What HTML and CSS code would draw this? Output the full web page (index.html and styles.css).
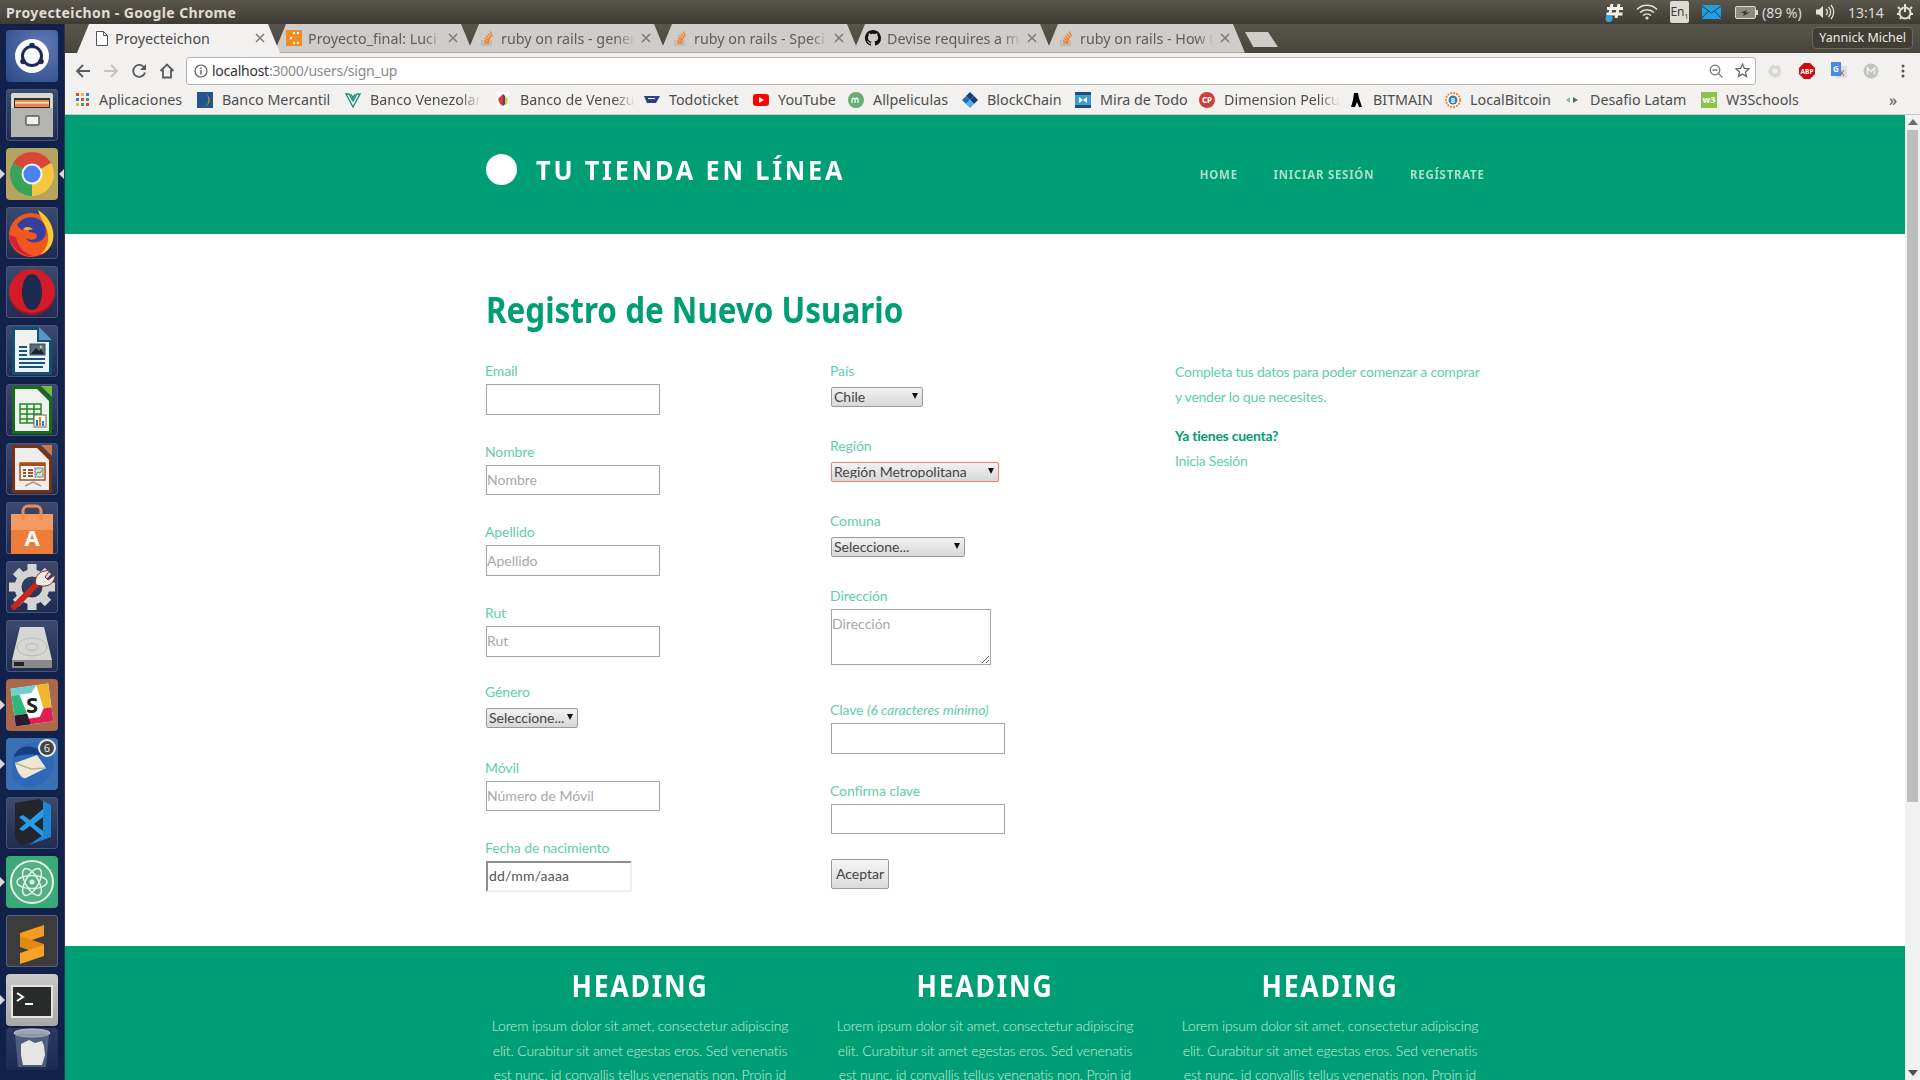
FILE: index.html
```html
<!DOCTYPE html>
<html lang="es">
<head>
<meta charset="utf-8">
<title>Proyecteichon</title>
<link rel="stylesheet" href="styles.css">
</head>
<body>
<svg class="defs" width="0" height="0" aria-hidden="true">
  <symbol id="so" viewBox="0 0 16 16">
    <path d="M3 10v5h9v-5" fill="none" stroke="#b5b5b5" stroke-width="1.4"/>
    <path d="M5 13h5.5M5 10.8l5.4 1.1M5.6 8.2l5 2.3M7 5.8l4.3 3.4M9 3.6l3.3 4.3M11.3 1.6l2 5" fill="none" stroke="#f0812a" stroke-width="1.4"/>
  </symbol>
  <symbol id="close" viewBox="0 0 10 10">
    <path d="M1 1l8 8M9 1l-8 8" stroke="currentColor" stroke-width="1.5"/>
  </symbol>
</svg>

<header class="panel">
  <span class="panel-title">Proyecteichon - Google Chrome</span>
  <div class="indicators">
    <svg class="ind-slack" width="22" height="22" viewBox="0 0 22 22"><path d="M8 3L5 17M15 3l-3 14M3 7.5h16M2.500 13h16" stroke="#f2f0ec" stroke-width="3"/><circle cx="5" cy="17.500" r="3.500" fill="#3aa3e3"/></svg>
    <svg class="ind-wifi" width="22" height="16" viewBox="0 0 22 16"><path d="M1 5.500a14 14 0 0 1 20 0M4 8.500a10 10 0 0 1 14 0M7 11.500a6 6 0 0 1 8 0" fill="none" stroke="#e4e1da" stroke-width="1.500"/><circle cx="11" cy="14" r="1.600" fill="#e4e1da"/></svg>
    <span class="ind-lang">En<sub>1</sub></span>
    <svg class="ind-mail" width="19" height="14" viewBox="0 0 19 14"><rect width="19" height="14" fill="#1f9fe0"/><path d="M0 1l9.500 7L19 1M0 13l6.500-7M19 13l-6.500-7" fill="none" stroke="#123a5c" stroke-width="1"/></svg>
    <svg class="ind-batt" width="23" height="13" viewBox="0 0 23 13"><rect x=".5" y=".5" width="20" height="12" rx="1.500" fill="#8d8a80" stroke="#dedbd3"/><rect x="21" y="4" width="2" height="5" fill="#dedbd3"/><path d="M5 7l7-3-1 2.500h4L8 10l1-3z" fill="#3c3a33"/></svg>
    <span class="ind-pct">(89 %)</span>
    <svg class="ind-vol" width="20" height="16" viewBox="0 0 20 16"><path d="M1 5.500h3L8 2v12l-4-3.500H1z" fill="#e4e1da"/><path d="M11 5a4 4 0 0 1 0 6M13.500 3a7 7 0 0 1 0 10M16 1a10.500 10.500 0 0 1 0 14" fill="none" stroke="#e4e1da" stroke-width="1.300"/></svg>
    <span class="ind-clock">13:14</span>
    <svg class="ind-gear" width="18" height="18" viewBox="0 0 18 18"><circle cx="9" cy="10" r="5.500" fill="none" stroke="#e4e1da" stroke-width="2"/><path d="M9 1v8" stroke="#e4e1da" stroke-width="2"/><path d="M2 4l2 2M16 4l-2 2M1 11h2M15 11h2M4 16l1-1.500M14 16l-1-1.500" stroke="#e4e1da" stroke-width="2"/></svg>
  </div>
</header>

<div class="desk">
  <nav class="launcher">
    <div class="tile t-ubuntu"><svg viewBox="0 0 52 52"><circle cx="26" cy="26" r="17" fill="#fff"/><circle cx="26" cy="26" r="9.500" fill="none" stroke="#1d2b58" stroke-width="3"/><circle cx="26" cy="15.500" r="2.800" fill="#1d2b58"/><circle cx="17" cy="31.500" r="2.800" fill="#1d2b58"/><circle cx="35" cy="31.500" r="2.800" fill="#1d2b58"/></svg></div>
    <div class="tile t-dark"><svg viewBox="0 0 52 52"><rect x="5" y="4" width="42" height="44" rx="2" fill="#d8d8d5"/><rect x="8" y="9" width="36" height="10" fill="#34302c"/><rect x="9" y="11" width="34" height="7" fill="#e9894a"/><rect x="9" y="13" width="34" height="1.500" fill="#fbe3c8"/><rect x="5" y="19" width="42" height="29" fill="#b4b4b2"/><rect x="20" y="27" width="13" height="9" rx="1" fill="#f0f0ee" stroke="#5d5d5b" stroke-width="1.500"/></svg></div>
    <div class="tile t-chrome running focused"><svg viewBox="0 0 52 52"><path d="M26 26L7 15A22 22 0 0 1 45 15Z" fill="#d8463a"/><path d="M26 26L45 15A22 22 0 0 1 26 48Z" fill="#f6c63f"/><path d="M26 26L26 48A22 22 0 0 1 7 15Z" fill="#3aa35a"/><circle cx="26" cy="26" r="10.500" fill="#f2f2f2"/><circle cx="26" cy="26" r="8.500" fill="#4a82ee"/></svg></div>
    <div class="tile t-dark"><svg viewBox="0 0 52 52"><circle cx="25" cy="28" r="22" fill="#f0561f"/><path d="M32 3c12 7 17 20 15 30-2 8-7 13-13 15 7-6 10-15 7-25-2-7-7-12-9-20z" fill="#fcc72f"/><path d="M11 18c5-8 16-10 23-5 7 5 8 15 2 20-6 4-14 3-16-2 5 3 11 2 11-2 0-3-5-4-8-4 0-3-3-2-5-2-3 0-5-2-7-5z" fill="#33409e"/><path d="M17 22c3-3 7-2 10 0-3 1-7 2-10 0z" fill="#ffa630"/><path d="M3 28c1 12 12 22 24 21-9-3-16-10-17-19z" fill="#d6203a"/></svg></div>
    <div class="tile t-dark"><svg viewBox="0 0 52 52"><circle cx="26" cy="26" r="23" fill="#d21a28"/><ellipse cx="26" cy="26" rx="10" ry="18" fill="#1c2a50"/><path d="M3 26a23 23 0 0 0 46 0c0 8-8 21-23 21S3 34 3 26z" fill="#9f1020"/></svg></div>
    <div class="tile t-dark"><svg viewBox="0 0 52 52"><path d="M6 2h27l13 13v35H6z" fill="#104f78"/><path d="M33 2l13 13H33z" fill="#5a97c2"/><path d="M9 5h22v12h12v30H9z" fill="#f2f2f0"/><g fill="#14557f"><rect x="13" y="21" width="8" height="2"/><rect x="13" y="25" width="8" height="2"/><rect x="13" y="29" width="8" height="2"/><rect x="13" y="33" width="26" height="2"/><rect x="13" y="37" width="26" height="2"/><rect x="13" y="41" width="24" height="2"/></g><rect x="24" y="19" width="15" height="11" fill="#5b6d7c" stroke="#14557f"/><path d="M25 29l5-6 3 3 2-2 3 5z" fill="#222"/><circle cx="35" cy="22" r="1.500" fill="#f3c13a"/></svg></div>
    <div class="tile t-dark"><svg viewBox="0 0 52 52"><path d="M6 2h27l13 13v35H6z" fill="#127014"/><path d="M35 2h11v11z" fill="#6fbf40"/><path d="M9 5h22l12 12v30H9z" fill="#f0f0ee"/><g fill="none" stroke="#1e8a20" stroke-width="1.500"><rect x="14" y="20" width="21" height="19"/><path d="M14 25h21M14 30h21M14 35h21M21 20v19M28 20v19"/></g><rect x="28" y="31" width="12" height="12" fill="#fff" stroke="#666"/><rect x="30" y="36" width="2" height="6" fill="#2a78c8"/><rect x="33" y="33" width="2" height="9" fill="#e8762d"/><rect x="36" y="37" width="2" height="5" fill="#2a78c8"/></svg></div>
    <div class="tile t-dark"><svg viewBox="0 0 52 52"><path d="M6 2h27l13 13v35H6z" fill="#7a3310"/><path d="M35 2h11v11z" fill="#c77a4c"/><path d="M9 5h22l12 12v30H9z" fill="#efeeec"/><rect x="14" y="20" width="25" height="17" fill="#fff" stroke="#b0491a" stroke-width="1.500"/><rect x="14" y="20" width="25" height="3" fill="#b0491a"/><g fill="#b0491a"><rect x="17" y="26" width="3" height="2"/><rect x="17" y="29" width="3" height="2"/><rect x="17" y="32" width="3" height="2"/><rect x="22" y="26" width="5" height="2"/><rect x="22" y="29" width="5" height="2"/><rect x="22" y="32" width="5" height="2"/></g><rect x="29" y="25" width="8" height="9" fill="#ddd" stroke="#777"/><path d="M30 32l2-3 2 1 2-3" fill="none" stroke="#3a9a3a"/><path d="M19 43l8-4 8 4" fill="none" stroke="#999" stroke-width="1.500"/></svg></div>
    <div class="tile t-dark"><svg viewBox="0 0 52 52"><path d="M5 12h42v40H5z" fill="#ee7d3b"/><path d="M5 12h42v16H5z" fill="#f59a62"/><path d="M17 18V9a5 5 0 0 1 5-5h8a5 5 0 0 1 5 5v9" fill="none" stroke="#f08a4b" stroke-width="3"/><text x="26" y="44" class="svg-a">A</text></svg></div>
    <div class="tile t-dark"><svg viewBox="0 0 52 52"><g fill="none" stroke="#d4d4d2" stroke-width="7"><circle cx="26" cy="26" r="14"/><path d="M26 3v8M26 41v8M3 26h8M41 26h8M10 10l5 5M37 37l5 5M10 42l5-5M37 15l5-5" stroke-width="9"/></g><path d="M8 46l24-24" stroke="#c8261c" stroke-width="6" stroke-linecap="round"/><path d="M30 24c-2-7 2-13 9-14l5-1-5 7 3 3 7-5c0 7-6 12-13 11z" fill="#ecebe8" stroke="#8c2a1f"/></svg></div>
    <div class="tile t-dark"><svg viewBox="0 0 52 52"><path d="M14 7h24l8 33v6a2 2 0 0 1-2 2H8a2 2 0 0 1-2-2v-6z" fill="#d6d6d4"/><ellipse cx="26" cy="27" rx="15" ry="9" fill="none" stroke="#b9b9b7"/><ellipse cx="26" cy="27" rx="6" ry="3.500" fill="none" stroke="#b9b9b7"/><path d="M6 40h40v6a2 2 0 0 1-2 2H8a2 2 0 0 1-2-2z" fill="#8a8a88"/><rect x="8" y="42" width="10" height="4" fill="#222"/></svg></div>
    <div class="tile t-slack running"><svg viewBox="0 0 52 52"><g transform="rotate(-8 26 26)"><rect x="7" y="7" width="38" height="38" fill="#fff"/><path d="M7 7h26L27 14H7z" fill="#6fcfd0"/><path d="M7 14h8l5 20H7z" fill="#2fb67f"/><path d="M33 7h12v24H37z" fill="#eeb72f"/><path d="M37 31h8v14H17l-1-6h16z" fill="#df1f52"/><path d="M7 34h13l2 11H7z" fill="#2d1a2e"/></g><text x="26" y="34" class="svg-s">S</text></svg></div>
    <div class="tile t-blue running"><svg viewBox="0 0 52 52"><path d="M6 24C6 14 16 5 27 5c10 0 18 6 20 14 3 14-5 27-19 30C17 51 8 45 6 35z" fill="#2d69b8"/><path d="M9 25l22-8 9 13-20 10c-5 2-10-9-11-15z" fill="#efe7d3"/><path d="M9 25l16 6 15-1" fill="none" stroke="#bdb295" stroke-width="1.500"/><path d="M8 19c2-8 11-12 18-10 6 1 10 5 13 10-8-4-20-3-31 0z" fill="#173e85"/></svg><span class="badge">6</span></div>
    <div class="tile t-dark"><svg viewBox="0 0 52 52"><path d="M9 6l24-4 12 8v30l-30 8L9 40z" fill="#22262b"/><path d="M37 4l8 4v32l-22 8 14-10z" fill="#1f86d4"/><path d="M37 12L24 23l-7-5-4 2 7 6-7 6 4 2 7-5 13 11z" fill="#2a9be8"/><path d="M37 20v14l-9-7z" fill="#22262b"/></svg></div>
    <div class="tile t-atom running"><svg viewBox="0 0 52 52"><circle cx="26" cy="26" r="21" fill="#54b082" stroke="#e3f3ea" stroke-width="2"/><g fill="none" stroke="#e3f3ea" stroke-width="1.500"><ellipse cx="26" cy="26" rx="15" ry="6.500" transform="rotate(60 26 26)"/><ellipse cx="26" cy="26" rx="15" ry="6.500" transform="rotate(-60 26 26)"/><ellipse cx="26" cy="26" rx="15" ry="6.500"/></g><circle cx="26" cy="26" r="2.500" fill="#e3f3ea"/></svg></div>
    <div class="tile t-sublime"><svg viewBox="0 0 52 52"><path d="M38 10v11L14 29V18z" fill="#f59c1e"/><path d="M14 21l24 8v11L14 32z" fill="#e08a14"/><path d="M38 30v11l-24 8V38z" fill="#f7a323"/></svg></div>
    <div class="tile t-term running"><svg viewBox="0 0 52 52"><rect x="5" y="11" width="42" height="33" fill="#e4e4e4"/><rect x="7" y="13" width="38" height="29" fill="#292b2a"/><path d="M11 19l6 4-6 4" fill="none" stroke="#fff" stroke-width="2"/><rect x="19" y="29" width="8" height="2" fill="#fff"/></svg></div>
    <div class="tile t-trash"><svg viewBox="0 0 52 42"><ellipse cx="26" cy="5" rx="18" ry="4" fill="#9aa4b4" stroke="#ccc"/><path d="M9 6l3 33h28l3-33" fill="#7c8a9e" opacity=".5"/><path d="M15 16l8-4 6 3 7-2 2 5 1 9-3 10H17l-2-10z" fill="#e6e6e4"/></svg></div>
  </nav>

  <div class="browser">
    <div class="tabstrip">
      <div class="tab tab-active">
        <svg class="fav-doc" width="12" height="15" viewBox="0 0 12 15"><path d="M.5.500h7l4 4v10H.500z M7.500.500v4h4" fill="#fff" stroke="#555"/></svg>
        <span class="tab-title">Proyecteichon</span>
        <svg class="tab-close" width="10" height="10"><use href="#close"/></svg>
      </div>
      <div class="tab">
        <svg width="16" height="16" viewBox="0 0 16 16"><rect width="16" height="16" rx="1" fill="#ef8c22"/><g fill="#fff"><circle cx="8" cy="3" r="1.200"/><circle cx="12" cy="3" r="1.200"/><circle cx="5" cy="8" r="1.200"/><circle cx="8" cy="13" r="1.200"/><circle cx="12" cy="13" r="1.200"/></g></svg>
        <span class="tab-title">Proyecto_final: Luci</span>
        <svg class="tab-close" width="10" height="10"><use href="#close"/></svg>
      </div>
      <div class="tab">
        <svg width="16" height="16"><use href="#so"/></svg>
        <span class="tab-title">ruby on rails - gener</span>
        <svg class="tab-close" width="10" height="10"><use href="#close"/></svg>
      </div>
      <div class="tab">
        <svg width="16" height="16"><use href="#so"/></svg>
        <span class="tab-title">ruby on rails - Speci</span>
        <svg class="tab-close" width="10" height="10"><use href="#close"/></svg>
      </div>
      <div class="tab">
        <svg width="16" height="16" viewBox="0 0 16 16"><path fill="#111" d="M8 0C3.580 0 0 3.580 0 8c0 3.540 2.290 6.530 5.470 7.590.4.070.55-.17.55-.38 0-.19-.01-.82-.01-1.490-2.010.37-2.530-.49-2.690-.94-.09-.23-.48-.94-.82-1.130-.28-.15-.68-.52-.01-.53.63-.01 1.080.58 1.230.82.720 1.210 1.870.87 2.330.66.070-.52.280-.87.510-1.070-1.780-.2-3.640-.89-3.640-3.950 0-.87.310-1.590.820-2.150-.08-.2-.36-1.020.08-2.120 0 0 .67-.21 2.200.82.640-.18 1.320-.27 2-.27.680 0 1.360.090 2 .27 1.530-1.040 2.200-.82 2.200-.82.440 1.100.160 1.920.080 2.120.510.560.820 1.270.820 2.150 0 3.070-1.870 3.750-3.650 3.950.290.250.540.730.540 1.480 0 1.070-.01 1.930-.01 2.200 0 .210.150.460.550.380A8.013 8.013 0 0016 8c0-4.420-3.580-8-8-8z"/></svg>
        <span class="tab-title">Devise requires a m</span>
        <svg class="tab-close" width="10" height="10"><use href="#close"/></svg>
      </div>
      <div class="tab">
        <svg width="16" height="16"><use href="#so"/></svg>
        <span class="tab-title">ruby on rails - How t</span>
        <svg class="tab-close" width="10" height="10"><use href="#close"/></svg>
      </div>
      <div class="newtab"></div>
      <div class="profile">Yannick Michel</div>
    </div>

    <div class="toolbar">
      <svg class="tool" width="16" height="16" viewBox="0 0 16 16"><path d="M15 8H2M8 2L2 8l6 6" fill="none" stroke="#5a5a5a" stroke-width="1.800"/></svg>
      <svg class="tool" width="16" height="16" viewBox="0 0 16 16"><path d="M1 8h13M8 2l6 6-6 6" fill="none" stroke="#c2c2c0" stroke-width="1.800"/></svg>
      <svg class="tool" width="16" height="16" viewBox="0 0 16 16"><path d="M13.500 5A6 6 0 1 0 14 9.500" fill="none" stroke="#5a5a5a" stroke-width="1.800"/><path d="M15 1v6H9z" fill="#5a5a5a"/></svg>
      <svg class="tool" width="16" height="16" viewBox="0 0 16 16"><path d="M1.500 8L8 1.500 14.500 8M4 6.500V14.500h8V6.500" fill="none" stroke="#5a5a5a" stroke-width="1.800"/></svg>
      <div class="omnibox">
        <svg width="14" height="14" viewBox="0 0 14 14"><circle cx="7" cy="7" r="6" fill="none" stroke="#5f5f5f" stroke-width="1.200"/><rect x="6.300" y="6" width="1.400" height="4.500" fill="#5f5f5f"/><rect x="6.300" y="3.500" width="1.400" height="1.500" fill="#5f5f5f"/></svg>
        <span class="url"><span class="url-host">localhost</span>:3000/users/sign_up</span>
        <svg width="14" height="14" viewBox="0 0 14 14"><circle cx="6" cy="6" r="4.800" fill="none" stroke="#777" stroke-width="1.300"/><path d="M3.500 6h5M9.500 9.500L13.500 13.500" stroke="#777" stroke-width="1.300"/></svg>
        <svg width="15" height="15" viewBox="0 0 15 15"><path d="M7.500 1.200l1.900 4.200 4.500.5-3.400 3 1 4.500-4-2.300-4 2.300 1-4.500-3.400-3 4.500-.5z" fill="none" stroke="#666" stroke-width="1.300"/></svg>
      </div>
      <div class="exts">
        <svg width="16" height="16" viewBox="0 0 16 16"><path d="M3 4l3-3 2 2 4-1 2 5-1 6-5 2-5-3-2-4z" fill="#d8d8d6"/><circle cx="8" cy="8" r="2.500" fill="#f2f1f0"/></svg>
        <svg width="16" height="16" viewBox="0 0 16 16"><path d="M5 0h6l5 5v6l-5 5H5l-5-5V5z" fill="#c70d0d"/><text x="8" y="11" class="svg-abp">ABP</text></svg>
        <svg width="16" height="18" viewBox="0 0 16 18"><rect x="5" y="4" width="11" height="12" fill="#ddd"/><rect width="10" height="14" fill="#4b86ec"/><text x="5" y="10" class="svg-g">G</text><path d="M9 8l4 6M13 8l-4 6" stroke="#777"/></svg>
        <svg width="16" height="16" viewBox="0 0 16 16"><circle cx="8" cy="8" r="7.500" fill="#c3c3c1"/><path d="M4.500 11.500V5L8 8.500 11.500 5v6.500" fill="none" stroke="#f2f1f0" stroke-width="1.500"/></svg>
        <svg width="16" height="16" viewBox="0 0 16 16"><g fill="#555"><circle cx="8" cy="3" r="1.500"/><circle cx="8" cy="8" r="1.500"/><circle cx="8" cy="13" r="1.500"/></g></svg>
      </div>
    </div>

    <div class="bookmarks">
      <div class="bm"><svg width="13" height="13" viewBox="0 0 13 13"><g><rect width="3" height="3" fill="#e2453a"/><rect x="5" width="3" height="3" fill="#f3b52e"/><rect x="10" width="3" height="3" fill="#3a77e8"/><rect y="5" width="3" height="3" fill="#3a77e8"/><rect x="5" y="5" width="3" height="3" fill="#e2453a"/><rect x="10" y="5" width="3" height="3" fill="#3ba55a"/><rect y="10" width="3" height="3" fill="#f3b52e"/><rect x="5" y="10" width="3" height="3" fill="#3ba55a"/><rect x="10" y="10" width="3" height="3" fill="#e2453a"/></g></svg><span>Aplicaciones</span></div>
      <div class="bm"><svg width="16" height="16" viewBox="0 0 16 16"><rect width="16" height="16" fill="#24558e"/><path d="M6 15c5-1 7-6 4-13 4 5 4 11-4 13z" fill="#f08a22"/></svg><span>Banco Mercantil</span></div>
      <div class="bm"><svg width="16" height="16" viewBox="0 0 16 16"><path d="M1 2l7 13 7-13h-3L8 9 4 2z M6 2l2 4 2-4" fill="none" stroke="#1f8a78" stroke-width="1.300"/></svg><span class="bm-fade">Banco Venezolar</span></div>
      <div class="bm"><svg width="16" height="16" viewBox="0 0 16 16"><rect x="2" width="12" height="16" fill="#fff"/><path d="M3 7l5-5v12L5 12z" fill="#e4362d"/><path d="M8 2l5 5-1 5-4 2z" fill="#f2c32e"/><path d="M8 2l2 2v8l-2 2z" fill="#25519e"/></svg><span class="bm-fade">Banco de Venezu</span></div>
      <div class="bm"><svg width="16" height="16" viewBox="0 0 16 16"><path d="M0 4h16l-4 7H3z" fill="#2c3f8f"/><path d="M4 6.500h7" stroke="#fff"/></svg><span>Todoticket</span></div>
      <div class="bm"><svg width="16" height="16" viewBox="0 0 16 16"><rect y="2" width="16" height="12" rx="3" fill="#f00"/><path d="M6 5l5 3-5 3z" fill="#fff"/></svg><span>YouTube</span></div>
      <div class="bm"><svg width="16" height="16" viewBox="0 0 16 16"><circle cx="8" cy="8" r="8" fill="#67ad6f"/><path d="M4 11V7M7 11V7M10 11V7M4 7c1-1 2-1 3 0 1-1 2-1 3 0" fill="none" stroke="#fff" stroke-width="1.200"/></svg><span>Allpeliculas</span></div>
      <div class="bm"><svg width="16" height="16" viewBox="0 0 16 16"><path d="M8 0l4 4-4 4-4-4z" fill="#123f7a"/><path d="M4 4l4 4-4 4-4-4z" fill="#1f6fb5"/><path d="M12 4l4 4-4 4-4-4z" fill="#123f7a"/><path d="M8 8l4 4-4 4-4-4z" fill="#4ab0ee"/></svg><span>BlockChain</span></div>
      <div class="bm"><svg width="16" height="16" viewBox="0 0 16 16"><rect width="16" height="16" fill="#1b4f7c"/><rect y="3" width="16" height="10" fill="#3f9ad0"/><path d="M4 5l4 3 4-3v6L8 8l-4 3z" fill="#fff"/></svg><span>Mira de Todo</span></div>
      <div class="bm"><svg width="16" height="16" viewBox="0 0 16 16"><circle cx="8" cy="8" r="8" fill="#c9423a"/><text x="8" y="11" class="svg-cp">CP</text></svg><span class="bm-fade">Dimension Pelicu</span></div>
      <div class="bm"><svg width="14" height="16" viewBox="0 0 14 16"><path d="M4 1h4l1 5 3 9H9L7 10l-2 5H1l2-7z" fill="#000"/></svg><span>BITMAIN</span></div>
      <div class="bm"><svg width="16" height="16" viewBox="0 0 16 16"><circle cx="8" cy="8" r="7" fill="#fff" stroke="#ee8a3a" stroke-width="2" stroke-dasharray="2 1"/><circle cx="8" cy="8" r="4.500" fill="#2b7fc0"/><text x="8" y="10.500" class="svg-b">B</text></svg><span>LocalBitcoin</span></div>
      <div class="bm"><svg width="14" height="16" viewBox="0 0 14 16"><path d="M5 5L1 8l4 3z" fill="#8cbd8c"/><path d="M8 5l5 3-5 3z" fill="#5a6d5a"/></svg><span class="bm-d">Desafio Latam</span></div>
      <div class="bm"><svg width="16" height="16" viewBox="0 0 16 16"><rect width="16" height="16" fill="#8bc34a"/><text x="8" y="11" class="svg-w3">w3</text></svg><span>W3Schools</span></div>
      <span class="bm-more">»</span>
    </div>

    <div class="viewport">
      <div class="page">
        <header class="site-head">
          <div class="wrap site-row">
            <a class="brand"><span class="brand-dot"></span><span class="brand-name">TU TIENDA EN LÍNEA</span></a>
            <ul class="site-nav">
              <li>HOME</li>
              <li>INICIAR SESIÓN</li>
              <li>REGÍSTRATE</li>
            </ul>
          </div>
        </header>

        <main class="content">
          <div class="wrap">
            <h1>Registro de Nuevo Usuario</h1>
            <form class="grid">
              <div class="col">
                <div class="field"><label>Email</label><input class="text" type="email"></div>
                <div class="field"><label>Nombre</label><input class="text" type="text" placeholder="Nombre"></div>
                <div class="field"><label>Apellido</label><input class="text" type="text" placeholder="Apellido"></div>
                <div class="field field-tight"><label>Rut</label><input class="text" type="text" placeholder="Rut"></div>
                <div class="field field-sel field-gender"><label>Género</label>
                  <div class="sel sel-s"><select><option>Seleccione...</option></select></div></div>
                <div class="field"><label>Móvil</label><input class="text" type="text" placeholder="Número de Móvil"></div>
                <div class="field"><label>Fecha de nacimiento</label><input class="date" type="text" value="dd/mm/aaaa"></div>
              </div>
              <div class="col">
                <div class="field field-sel"><label>País</label>
                  <div class="sel sel-s"><select><option>Chile</option></select></div></div>
                <div class="field field-sel"><label>Región</label>
                  <div class="sel sel-l"><select class="focus"><option>Región Metropolitana</option></select></div></div>
                <div class="field field-sel"><label>Comuna</label>
                  <div class="sel sel-m"><select><option>Seleccione...</option></select></div></div>
                <div class="field field-area"><label>Dirección</label><textarea placeholder="Dirección"></textarea></div>
                <div class="field"><label>Clave <em>(6 caracteres mínimo)</em></label><input class="text" type="password"></div>
                <div class="field field-last"><label>Confirma clave</label><input class="text" type="password"></div>
                <button class="submit" type="button">Aceptar</button>
              </div>
              <aside class="col side">
                <p>Completa tus datos para poder comenzar a comprar<br>y vender lo que necesites.</p>
                <p class="side-q">Ya tienes cuenta?</p>
                <p>Inicia Sesión</p>
              </aside>
            </form>
          </div>
        </main>

        <footer class="site-foot">
          <div class="wrap grid">
            <section class="foot-col"><h3>HEADING</h3><p>Lorem ipsum dolor sit amet, consectetur adipiscing<br>elit. Curabitur sit amet egestas eros. Sed venenatis<br>est nunc, id convallis tellus venenatis non. Proin id</p></section>
            <section class="foot-col"><h3>HEADING</h3><p>Lorem ipsum dolor sit amet, consectetur adipiscing<br>elit. Curabitur sit amet egestas eros. Sed venenatis<br>est nunc, id convallis tellus venenatis non. Proin id</p></section>
            <section class="foot-col"><h3>HEADING</h3><p>Lorem ipsum dolor sit amet, consectetur adipiscing<br>elit. Curabitur sit amet egestas eros. Sed venenatis<br>est nunc, id convallis tellus venenatis non. Proin id</p></section>
          </div>
        </footer>
      </div>
      <div class="scrollbar">
        <span class="arrow-up"></span>
        <span class="thumb"></span>
        <span class="arrow-down"></span>
      </div>
    </div>
  </div>
</div>
</body>
</html>
```

FILE: styles.css
```css
* { box-sizing: border-box; }
html, body { margin: 0; height: 1080px; overflow: hidden; }
body { font-family: "Noto Sans", sans-serif; background: #fff; display: flex; flex-direction: column; width: 1920px; }
.defs { position: absolute; }

/* top panel */
.panel { height: 24px; flex: none; display: flex; align-items: center; justify-content: space-between; padding-left: 6px; background: linear-gradient(#5a574c, #3d3b34); color: #e0ddd4; }
.panel-title { font: 700 14px "Noto Sans", sans-serif; letter-spacing: .4px; }
.indicators { display: flex; align-items: center; height: 24px; font-size: 14px; }
.ind-slack { margin-right: 10px; margin-left: 3px; }
.ind-wifi { margin-right: 12px; }
.ind-lang { width: 19px; height: 22px; margin-right: 13px; background: #dedbd3; color: #3c3a33; border-radius: 2px; font-size: 12px; line-height: 22px; text-align: center; white-space: nowrap; overflow: hidden; }
.ind-lang sub { font-size: 7px; }
.ind-mail { margin-right: 14px; }
.ind-batt { margin-right: 4px; }
.ind-pct { width: 53px; font-size: 14px; color: #dedbd3; white-space: nowrap; }
.ind-vol { margin-right: 13px; }
.ind-clock { width: 48px; font-size: 14px; color: #dedbd3; }
.ind-gear { margin-right: 6px; }

.desk { flex: 1; display: flex; min-height: 0; }

/* launcher */
.launcher { width: 65px; flex: none; background: #11214a; display: flex; flex-direction: column; align-items: flex-start; gap: 7px; padding: 6px 0 0 6px; overflow: hidden; border-right: 1px solid #2b3350; }
.tile { position: relative; width: 52px; height: 52px; flex: none; border-radius: 4px; }
.tile svg { display: block; width: 52px; height: 52px; }
.t-ubuntu { background: radial-gradient(circle at 70% 30%, #5e79b4, #2c4889); }
.t-dark { background: linear-gradient(#3d4a70, #1f2c52); box-shadow: inset 0 0 0 1px #4a5678; }
.t-chrome { background: #b5a45f; }
.t-slack { background: #a9694a; }
.t-blue { background: #3b70b2; }
.t-atom { background: #3aa877; }
.t-sublime { background: #3c3c3c; box-shadow: inset 0 0 0 1px #566084; }
.t-term { background: linear-gradient(#c9c9c9, #a8a8a8); }
.t-trash { height: 42px; margin-top: -5px; background: linear-gradient(#2a3a60, #1a2a50); }
.t-trash svg { height: 42px; }
.running::before { content: ""; position: absolute; left: -6px; top: 21px; border: 5px solid transparent; border-left-color: #d8d8d8; border-right-width: 0; }
.focused::after { content: ""; position: absolute; right: -6px; top: 21px; border: 5px solid transparent; border-right-color: #d8d8d8; border-left-width: 0; }
.badge { position: absolute; top: 1px; right: 2px; width: 18px; height: 18px; border-radius: 50%; background: #444; border: 2px solid #eee; color: #eee; font-size: 11px; line-height: 14px; text-align: center; }
.svg-a { font: 700 22px "Noto Sans", sans-serif; fill: #fff; text-anchor: middle; }
.svg-s { font: 700 22px "Noto Sans", sans-serif; fill: #222; text-anchor: middle; }
.svg-abp { font: 700 6.500px "Noto Sans", sans-serif; fill: #fff; text-anchor: middle; }
.svg-g { font: 700 8px "Noto Sans", sans-serif; fill: #fff; text-anchor: middle; }
.svg-cp { font: 700 8px "Noto Sans", sans-serif; fill: #fff; text-anchor: middle; }
.svg-b { font: 700 6.500px "Noto Sans", sans-serif; fill: #fff; text-anchor: middle; }
.svg-w3 { font: 700 9px "Noto Sans", sans-serif; fill: #fff; text-anchor: middle; }

/* browser */
.browser { flex: 1; min-width: 0; display: flex; flex-direction: column; }
.tabstrip { height: 29px; flex: none; display: flex; padding-left: 12px; background: linear-gradient(#58554b, #48453c); }
.tab { position: relative; width: 199px; height: 29px; margin-right: -6px; padding: 0 15px 1px 12px; display: flex; align-items: center; gap: 6px; background: linear-gradient(#cfccc9 28px, #a8a5a0 0); clip-path: polygon(0 100%, 12px 0, calc(100% - 12px) 0, 100% 100%); font-size: 14.300px; color: #5f5e5c; }
.tab > svg:first-child { flex: none; }
.tab-active { width: 203px; padding-left: 19px; background: #f2f1f0; z-index: 1; color: #4a4a48; }
.tab-active .tab-title { margin-left: 1px; }
.tab-title { flex: 1; min-width: 0; white-space: nowrap; -webkit-mask-image: linear-gradient(to right, #000 calc(100% - 18px), transparent); mask-image: linear-gradient(to right, #000 calc(100% - 18px), transparent); }
.tab-active .tab-title { -webkit-mask-image: none; mask-image: none; }
.tab-close { flex: none; color: #7d7c7a; }
.newtab { width: 33px; height: 15px; margin: 8px 0 0 6px; background: #cfccc9; clip-path: polygon(0 0, 70% 0, 100% 100%, 25% 100%); flex: none; }
.profile { margin: 3px 7px 0 auto; height: 22px; padding: 0 6px; border: 1px solid #6a675d; border-radius: 4px; background: #3f3d36; color: #eeece6; font-size: 12.500px; line-height: 20px; white-space: nowrap; }

.toolbar { height: 32px; flex: none; display: flex; align-items: center; padding: 3px 10px 0 10px; background: #f2f1f0; }
.tool { flex: none; margin-right: 12px; }
.tool:nth-child(4) { margin-right: 11px; }
.omnibox { width: 1570px; height: 28px; flex: none; display: flex; align-items: center; gap: 5px; padding: 0 5px 0 7px; background: #fff; border: 1px solid #b8b5b0; border-radius: 3px; }
.url { flex: 1; font-size: 14px; letter-spacing: -.25px; color: #8a8a8a; margin-left: -1px; }
.url-host { color: #333; }
.omnibox svg:nth-last-child(2) { margin-right: 7px; }
.exts { display: flex; align-items: center; margin-left: 11px; gap: 16px; }

.bookmarks { height: 30px; flex: none; display: flex; align-items: center; padding-left: 11px; background: #f2f1f0; border-bottom: 1px solid #c9c7c4; font-size: 14.300px; color: #4d4d4b; }
.bm { display: flex; align-items: center; gap: 9px; flex: none; white-space: nowrap; }
.bm svg { flex: none; }
.bm:nth-child(1) { width: 121px; gap: 10px; }
.bm:nth-child(2) { width: 148px; }
.bm:nth-child(3) { width: 150px; }
.bm:nth-child(4) { width: 149px; }
.bm:nth-child(5) { width: 109px; }
.bm:nth-child(6) { width: 95px; }
.bm:nth-child(7) { width: 114px; }
.bm:nth-child(8) { width: 113px; }
.bm:nth-child(9) { width: 124px; }
.bm:nth-child(10) { width: 151px; }
.bm:nth-child(11) { width: 95px; }
.bm:nth-child(12) { width: 120px; }
.bm:nth-child(13) { width: 136px; gap: 11px; }
.bm:nth-child(14) { width: 188px; }
.bm-fade { -webkit-mask-image: linear-gradient(to right, #000 82%, transparent); mask-image: linear-gradient(to right, #000 82%, transparent); }
.bm-more { font-size: 16px; color: #555; }

/* viewport */
.viewport { flex: 1; min-height: 0; display: flex; }
.page { flex: 1; min-width: 0; overflow: hidden; font-family: Lato, sans-serif; }
.scrollbar { width: 15px; flex: none; position: relative; background: #f1f1f1; display: flex; flex-direction: column; align-items: center; padding: 0 2px; }
.arrow-up { flex: none; margin-top: 4px; border: 5px solid transparent; border-bottom: 6px solid #6d6d6d; border-top: 0; }
.thumb { flex: none; width: 11px; height: 672px; margin-top: 5px; background: #bdbdbd; }
.arrow-down { flex: none; margin-top: auto; margin-bottom: 4px; border: 5px solid transparent; border-top: 6px solid #4f4f4f; border-bottom: 0; }

.wrap { width: 996px; margin-left: 421px; }
.site-head { height: 119px; padding-top: 39px; background: #009e74; }
.site-row { display: flex; align-items: flex-start; justify-content: space-between; }
.brand { display: flex; align-items: center; gap: 19px; }
.brand-dot { width: 31px; height: 31px; border-radius: 50%; background: #fff; flex: none; }
.brand-name { font-family: "Noto Sans", sans-serif; font-size: 27px; font-weight: 700; letter-spacing: 3px; line-height: 31px; color: #fff; transform: scaleX(.936); transform-origin: left center; }
.site-nav { display: flex; gap: 39px; list-style: none; margin: 13px -3px 0 0; padding: 0; font-family: "Noto Sans", sans-serif; font-size: 12.500px; line-height: 16px; font-weight: 700; letter-spacing: .8px; color: #a9dfcb; transform: scaleX(.917); transform-origin: right center; }

.content { height: 712px; padding-top: 50px; background: #fff; }
h1 { margin: 0 0 24px; font-family: "Noto Sans", sans-serif; font-size: 36px; line-height: 52px; font-weight: 700; color: #009e74; transform: scaleX(.872); transform-origin: left center; }
.grid { display: grid; grid-template-columns: repeat(3, 306px); column-gap: 39px; }
label { display: block; height: 24px; margin-left: -1px; font-size: 14px; line-height: 22px; color: #62cdae; letter-spacing: -.1px; }
label em { font-style: italic; }
.field { margin-bottom: 26px; }
.field-tight { margin-bottom: 24px; }
.field-sel { margin-bottom: 28px; }
.field-gender { margin-bottom: 29px; }
.field-area { margin-bottom: 34px; }
.field-last { margin-bottom: 25px; }
input, textarea, select, button { font-family: Lato, sans-serif; font-size: 14px; display: block; margin: 0; border-radius: 0; }
.text { width: 174px; height: 30.670px; padding: 0 0 1px; border: 1px solid #a5a5a5; background: #fff; outline: 0; }
.text::placeholder, textarea::placeholder { color: #a8a8a8; opacity: 1; }
.date { width: 146px; height: 31px; padding: 0 1px 2px; border: 2px solid; border-color: #8e8e8e #eee #eee #8e8e8e; color: #555; background: #fff; letter-spacing: .2px; }
textarea { width: 160px; height: 56px; padding: 5px 0; border: 1px solid #a5a5a5; resize: both; }
.sel { position: relative; height: 20px; margin-top: 3px; }
.sel::after { content: ""; position: absolute; right: 5px; top: 6px; border: 3.500px solid transparent; border-top: 6px solid #111; border-bottom: 0; }
.sel-s { width: 92px; }
.sel-m { width: 134px; }
.sel-l { width: 168px; }
select { width: 100%; height: 100%; padding: 0 0 3px 2px; appearance: none; -webkit-appearance: none; border: 1px solid #9a9a9a; border-radius: 2px; background: linear-gradient(#f2f2f2, #d8d8d8); color: #444; }
select.focus { border-color: #e58a72; box-shadow: 0 0 1px #e58a72; }
.submit { width: 58px; height: 30px; padding: 0 0 2px; border: 1px solid #9a9a9a; border-radius: 2px; background: linear-gradient(#f4f4f4, #dcdcdc); color: #444; }
.side { margin-left: -1px; }
.side p { margin: 0; font-size: 14px; line-height: 25px; color: #62cdae; letter-spacing: -.25px; white-space: nowrap; }
.side p:first-child { margin-top: -1px; }
.side .side-q { margin-top: 14px; font-weight: 700; color: #009e74; }

.site-foot { height: 140px; padding-top: 19px; background: #009e74; }
.foot-col { text-align: center; padding-left: 2px; }
.foot-col h3 { margin: 0 0 7px; font-family: "Noto Sans", sans-serif; font-size: 30px; line-height: 42px; font-weight: 700; letter-spacing: 2px; color: #fff; transform: scaleX(.888); }
.foot-col p { margin: 0; font-size: 14px; line-height: 24.500px; font-weight: 300; letter-spacing: -.15px; color: #c9ecdf; white-space: nowrap; }
```
